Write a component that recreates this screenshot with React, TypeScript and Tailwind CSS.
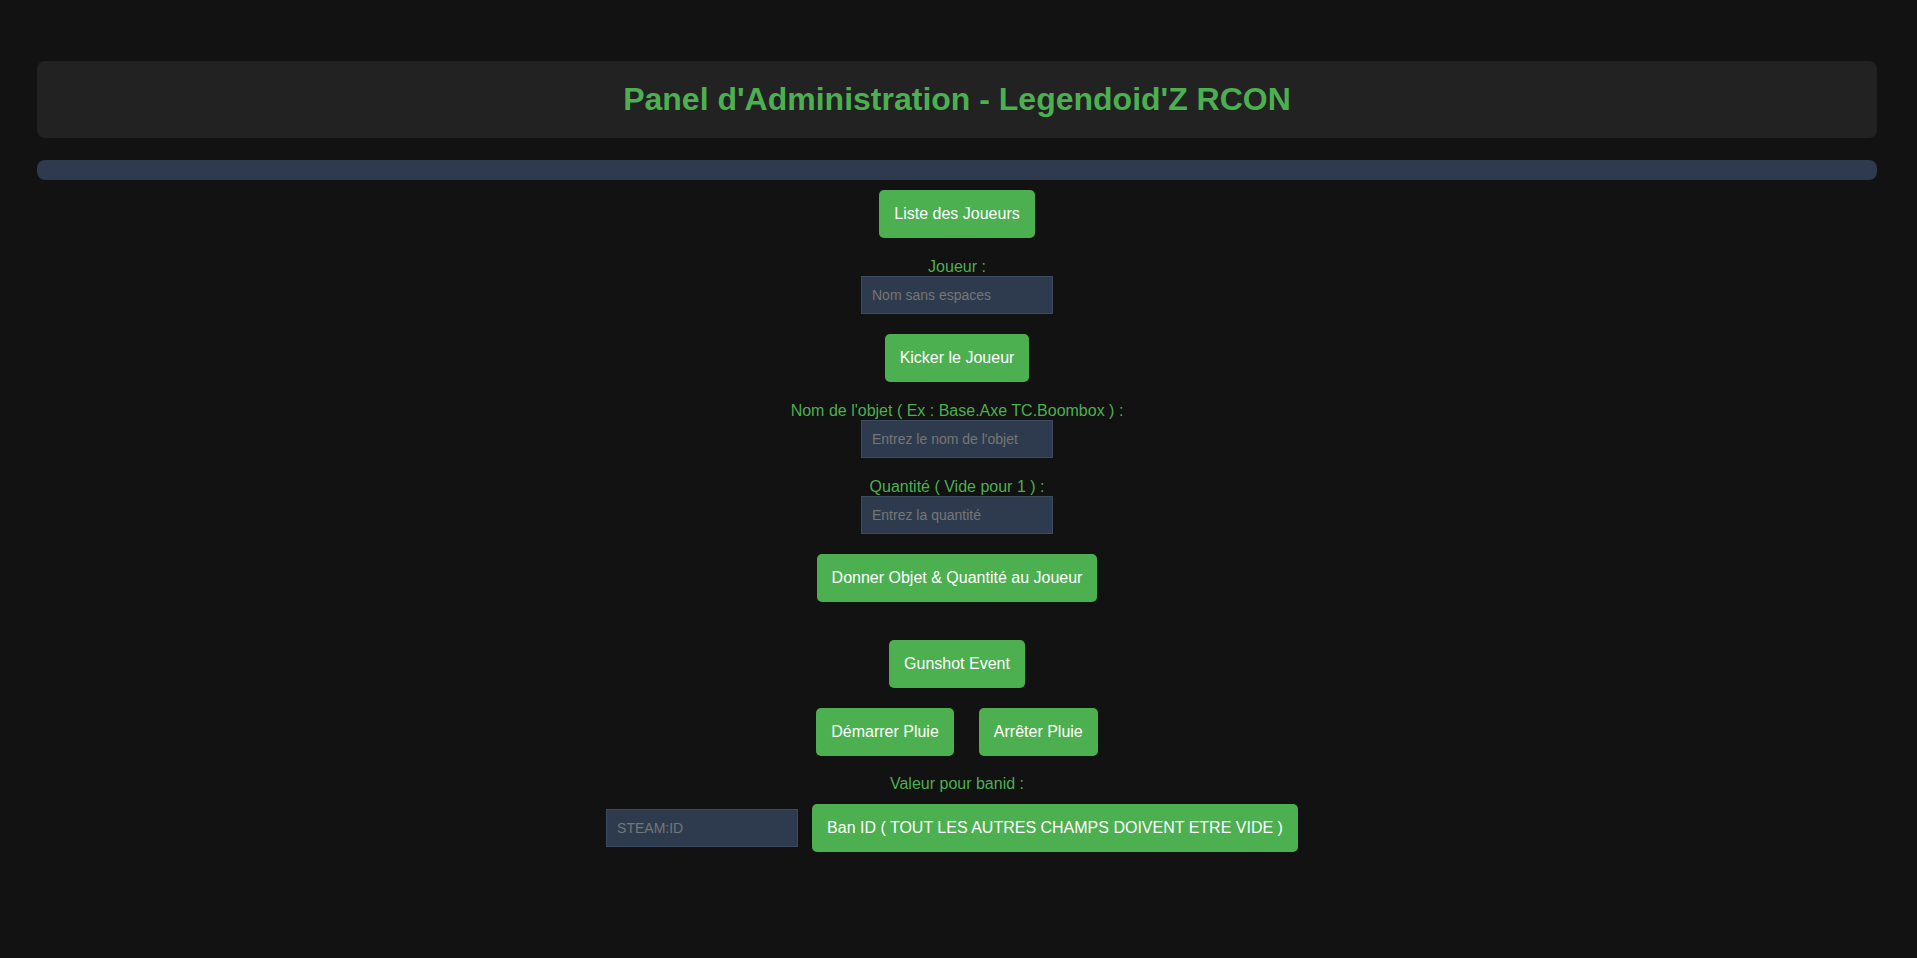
import React from "react";

const btn =
  "bg-[#4caf50] text-white text-[16px] leading-[18px] px-[15px] py-[15px] rounded-[5px] whitespace-nowrap";
const inp =
  "w-[192px] bg-[#2e3b4e] border border-[#3d4b61] text-white text-[14px] leading-[16px] px-[10px] py-[10px] placeholder:text-[#767676] outline-none";
const lbl = "text-[#4caf50] text-[16px] leading-[18px] whitespace-nowrap";

export default function App() {
  return (
    <div className="min-h-screen bg-[#121212] font-['Liberation_Sans',Arial,sans-serif] pt-[61px] pl-[37px] pr-[40px] pb-[40px]">
      <div className="bg-[#222222] rounded-[8px] py-[20px] text-center">
        <h1 className="text-[32px] leading-[37px] font-bold text-[#4caf50]">
          Panel d'Administration - Legendoid'Z RCON
        </h1>
      </div>
      <div className="mt-[22px] h-[20px] rounded-[8px] bg-[#2e3b4e]" />
      <div className="flex flex-col items-center">
        <button className={`${btn} mt-[10px]`}>Liste des Joueurs</button>
        <label className={`${lbl} mt-[20px]`}>Joueur :</label>
        <input className={inp} placeholder="Nom sans espaces" />
        <button className={`${btn} mt-[20px]`}>Kicker le Joueur</button>
        <label className={`${lbl} mt-[20px]`}>
          Nom de l'objet ( Ex : Base.Axe TC.Boombox ) :
        </label>
        <input className={inp} placeholder="Entrez le nom de l'objet" />
        <label className={`${lbl} mt-[20px]`}>Quantité ( Vide pour 1 ) :</label>
        <input className={inp} placeholder="Entrez la quantité" />
        <button className={`${btn} mt-[20px]`}>
          Donner Objet &amp; Quantité au Joueur
        </button>
        <button className={`${btn} mt-[38px]`}>Gunshot Event</button>
        <div className="mt-[20px] flex gap-[25px]">
          <button className={btn}>Démarrer Pluie</button>
          <button className={btn}>Arrêter Pluie</button>
        </div>
        <label className={`${lbl} mt-[19px]`}>Valeur pour banid :</label>
        <div className="mt-[11px] flex items-center gap-[14px] pr-[10px]">
          <input className={inp} placeholder="STEAM:ID" />
          <button className={btn}>
            Ban ID ( TOUT LES AUTRES CHAMPS DOIVENT ETRE VIDE )
          </button>
        </div>
      </div>
    </div>
  );
}
